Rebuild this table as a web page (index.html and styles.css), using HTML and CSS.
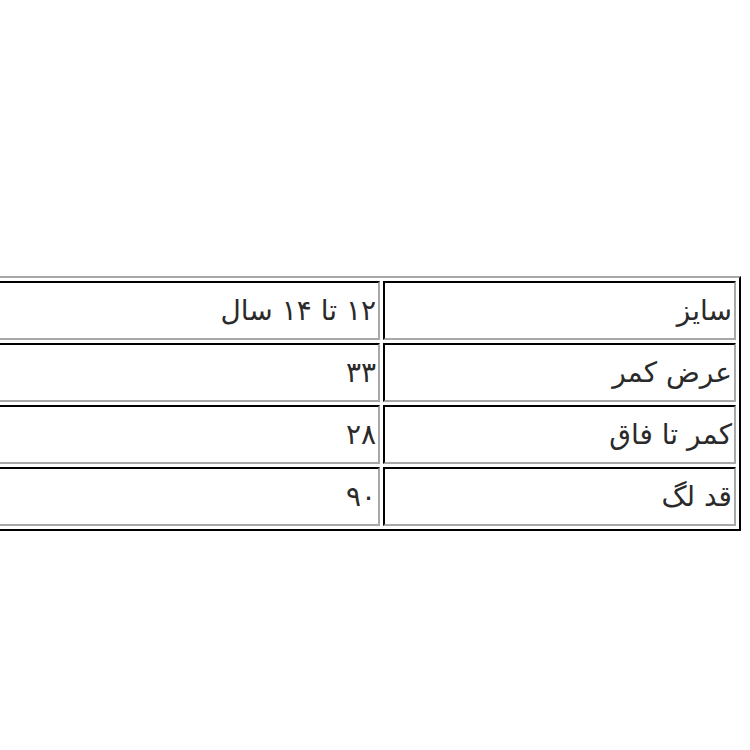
FILE: index.html
```html
<!DOCTYPE html>
<html lang="fa" dir="rtl">
<head>
<meta charset="utf-8">
<link rel="stylesheet" href="styles.css">
</head>
<body>
<div class="page">
<table class="size-table">
<tbody>
<tr><td class="label">سایز</td><td class="value">۱۲ تا ۱۴ سال</td></tr>
<tr><td class="label">عرض کمر</td><td class="value">۳۳</td></tr>
<tr><td class="label">کمر تا فاق</td><td class="value">۲۸</td></tr>
<tr><td class="label">قد لگ</td><td class="value">۹۰</td></tr>
</tbody>
</table>
</div>
</body>
</html>
```
FILE: styles.css
```css
html, body {
  margin: 0;
  padding: 0;
  background: #fff;
}
body {
  direction: rtl;
  font-family: "DejaVu Sans", "Noto Sans", sans-serif;
  color: #2a2a2a;
}
.page {
  padding: 276px 9px 0 0;
  overflow: hidden;
  width: 741px;
  display: flex;
  justify-content: flex-start;
}
.size-table {
  flex: none;
  width: 800px;
  border-collapse: separate;
  border-spacing: 3px;
  border-style: solid;
  border-width: 2px;
  border-color: #a8a8a8 #000 #000 #a8a8a8;
}
.size-table td {
  height: 55px;
  padding: 0 2px;
  border-style: solid;
  border-width: 2px;
  border-color: #000 #a8a8a8 #a8a8a8 #000;
  font-size: 28px;
  text-align: right;
  vertical-align: middle;
  line-height: 1;
}
.size-table td.label {
  width: 345px;
}
```
